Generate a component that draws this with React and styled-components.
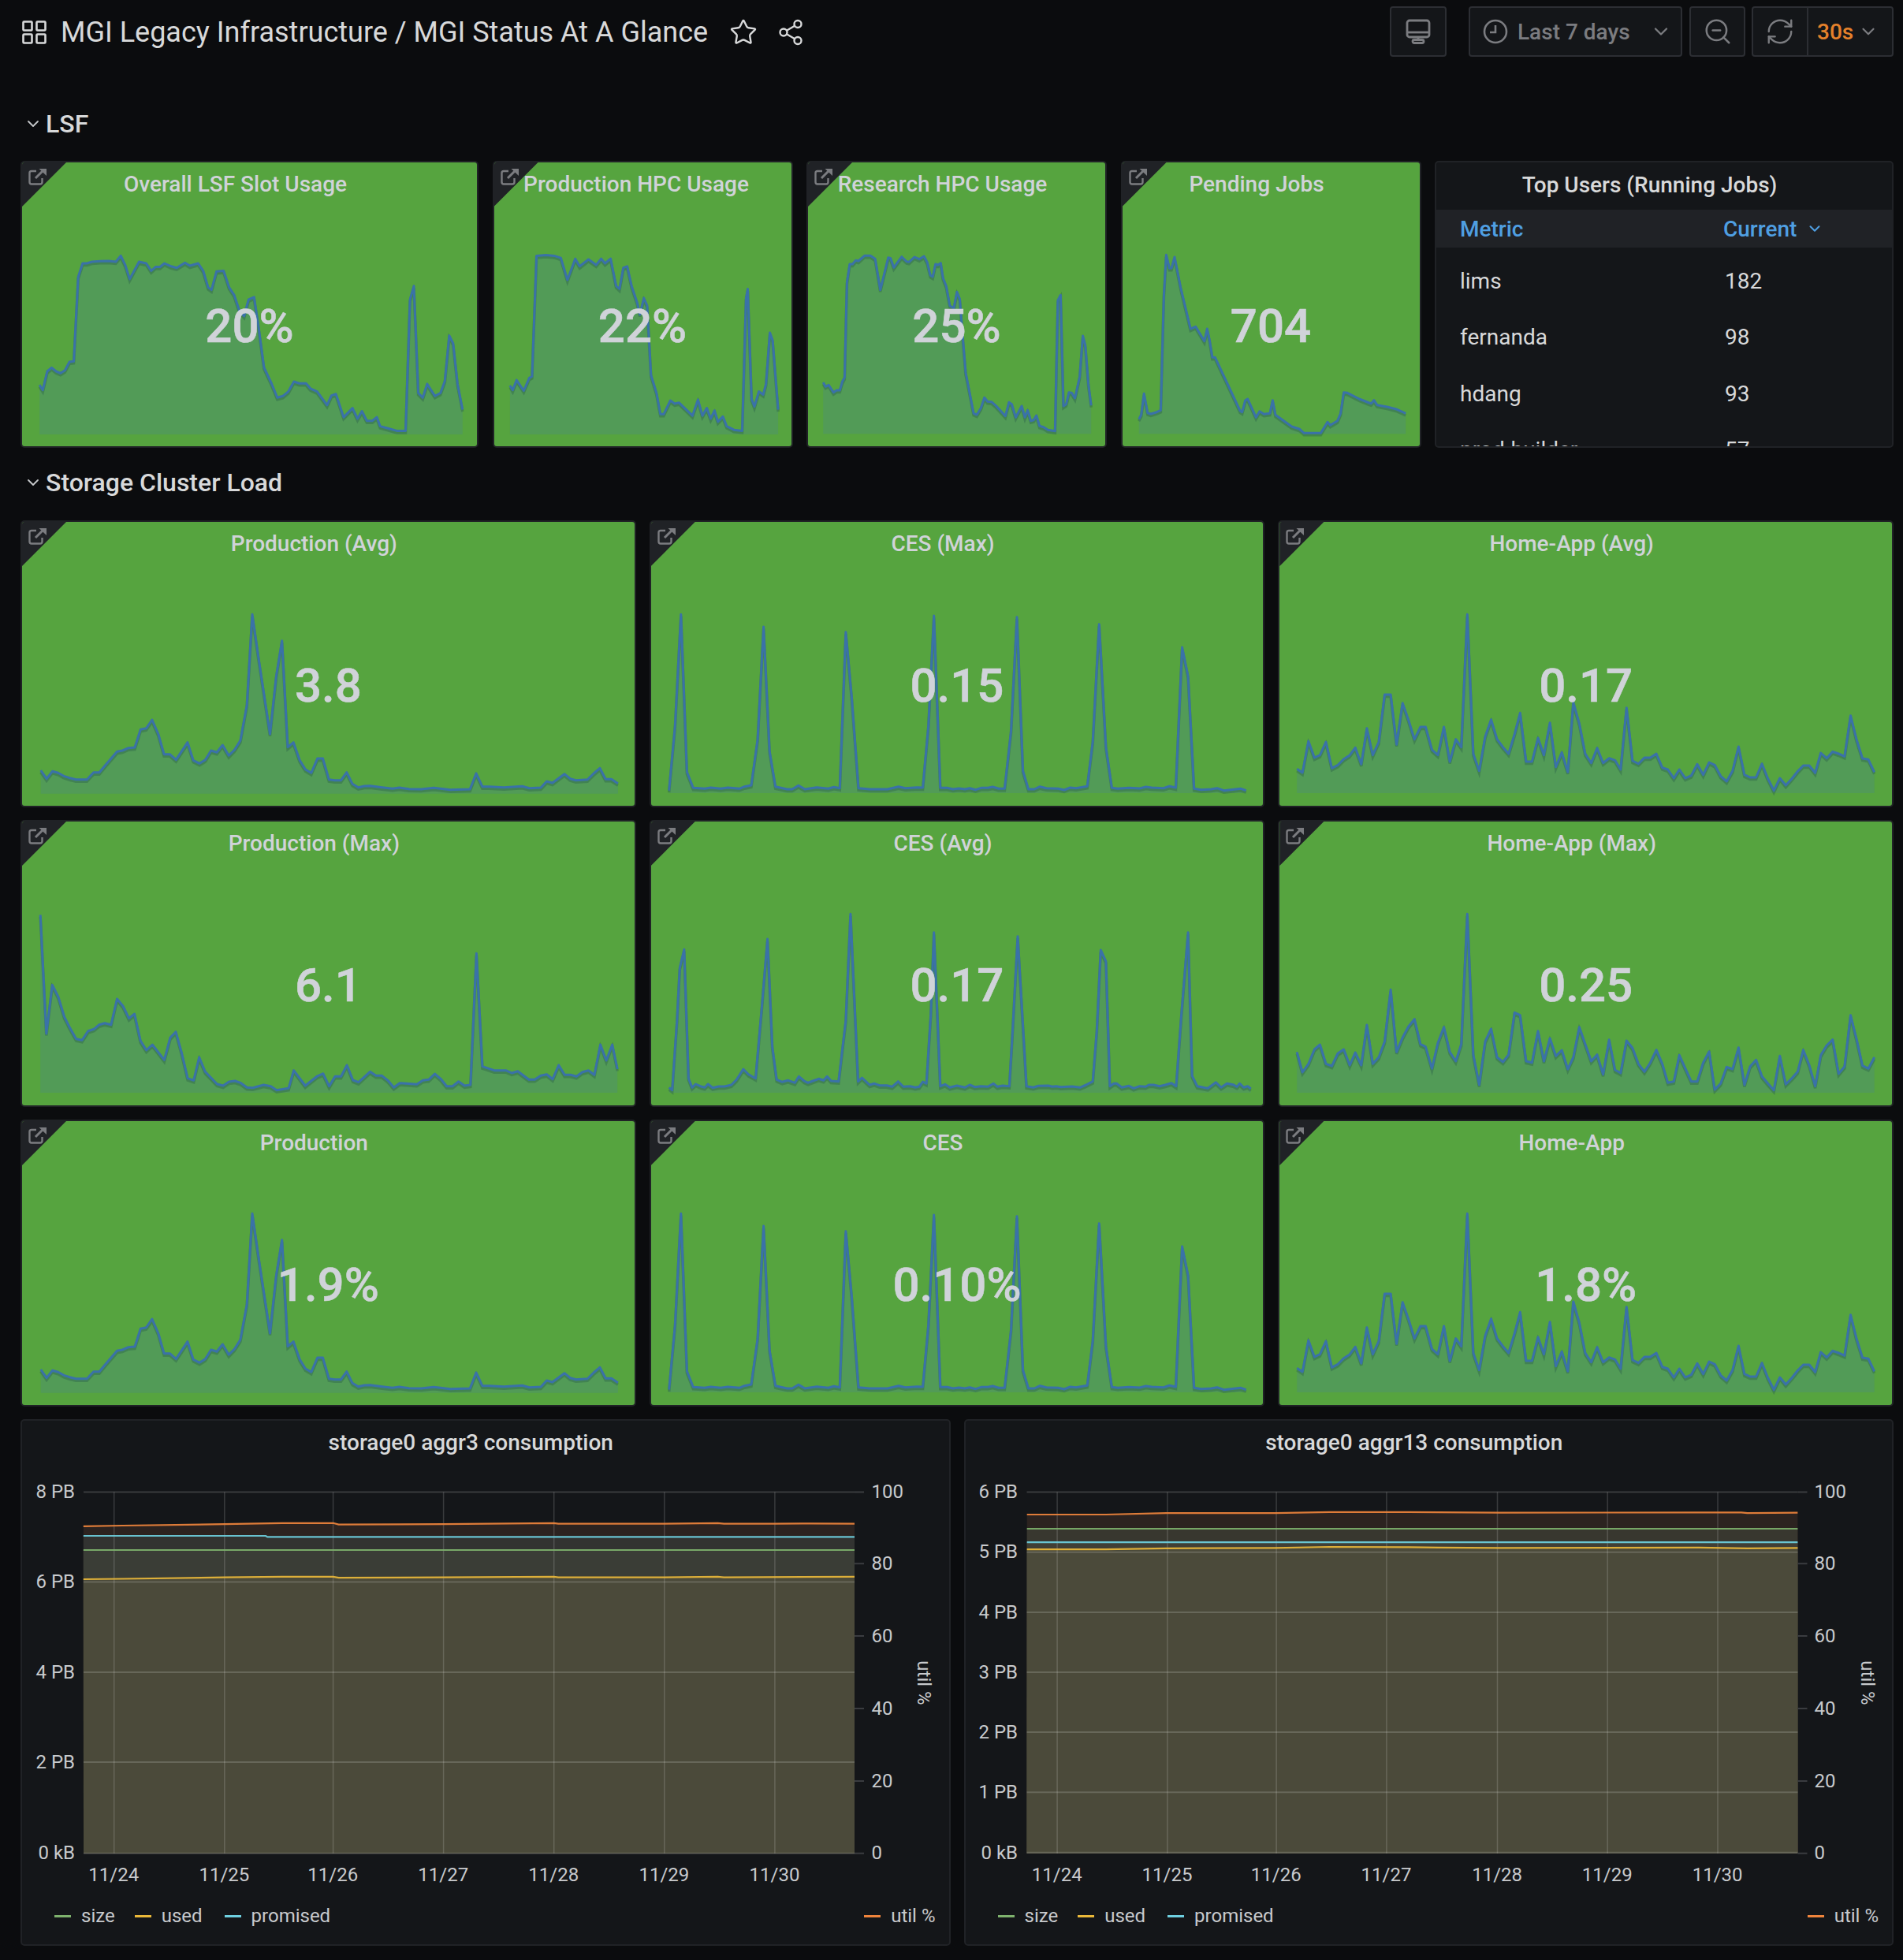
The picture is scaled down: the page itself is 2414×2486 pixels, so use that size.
import React from "react";
import styled, { createGlobalStyle } from "styled-components";
import { Star, Share2, ZoomOut, RefreshCw, ChevronDown } from "lucide-react";

const Global = createGlobalStyle`
  html, body { margin: 0; padding: 0; background: #0b0c0e; }
  * { box-sizing: border-box; }
  body { font-family: Roboto, "Liberation Sans", sans-serif; color: #d8d9da; }
`;

const Page = styled.div`
  width: 2414px;
  height: 2486px;
  padding: 8px 12px 18px 26px;
  overflow: hidden;
`;
const Toolbar = styled.header`
  display: flex;
  align-items: center;
  height: 64px;
`;
const Breadcrumb = styled.div`
  display: flex;
  align-items: center;
  color: #d8d9da;
  font-size: 36px;
  margin-left: 2px;
  padding-top: 2px;
`;
const TitleText = styled.span`
  margin: 0 0 0 18px;
`;
const HeadIcon = styled.span`
  display: inline-flex;
  color: #d8d9da;
  margin-left: ${(p) => p.$ml}px;
`;
const Tools = styled.div`
  margin-left: auto;
  display: flex;
  align-items: stretch;
  height: 64px;
`;
const ToolButton = styled.div`
  display: flex;
  align-items: center;
  justify-content: ${(p) => p.$justify || "center"};
  width: ${(p) => p.$w}px;
  margin-left: ${(p) => p.$ml || 0}px;
  background: #141619;
  border: 2px solid #2c2e33;
  border-radius: 4px;
  color: #7b7c80;
  font-weight: 500;
  font-size: 28px;
  padding: ${(p) => p.$pad || 0};
`;
const ToolGroup = styled.div`
  display: flex;
  margin-left: 8px;
  width: 180px;
  background: #141619;
  border: 2px solid #2c2e33;
  border-radius: 4px;
`;
const RefreshPart = styled.div`
  width: 70px;
  display: flex;
  align-items: center;
  justify-content: center;
  color: #7b7c80;
  border-right: 2px solid #2c2e33;
`;
const IntervalPart = styled.div`
  flex: 1;
  display: flex;
  align-items: center;
  padding-left: 11px;
  color: #e5812b;
  font-size: 28px;
  font-weight: 500;
`;
const Chev = styled.span`
  display: inline-flex;
  color: #7b7c80;
  margin-left: ${(p) => p.$ml}px;
`;
const RangeText = styled.span`
  margin-left: 12px;
`;

const SectionHeader = styled.div`
  display: flex;
  align-items: center;
  height: 40px;
  margin: ${(p) => p.$m};
  font-size: 32px;
  font-weight: 500;
  color: #d8d9da;
`;
const SectionChevron = styled.span`
  display: inline-flex;
  color: #c7c9cc;
  margin: 0 4px 0 4px;
`;

const TopRow = styled.div`
  display: grid;
  grid-template-columns: 581px 381px 381px 381px 582px;
  column-gap: 17.5px;
  height: 364px;
`;
const StatGrid = styled.div`
  display: grid;
  grid-template-columns: repeat(3, 1fr);
  grid-auto-rows: 364px;
  gap: 16px 17px;
`;
const ChartRow = styled.div`
  display: grid;
  grid-template-columns: repeat(2, 1fr);
  column-gap: 17px;
  margin-top: 16px;
`;

const StatPanel = styled.section`
  position: relative;
  display: flex;
  flex-direction: column;
  height: 364px;
  background: #56a43f;
  border: 2px solid #202226;
  border-radius: 5px;
  overflow: hidden;
`;
const Corner = styled.div`
  position: absolute;
  left: 0;
  top: 0;
  width: 56px;
  height: 56px;
  background: #202226;
  clip-path: polygon(0 0, 100% 0, 0 100%);
`;
const CornerIcon = styled.svg`
  position: absolute;
  left: 8px;
  top: 7px;
`;
const PanelTitle = styled.h3`
  position: relative;
  margin: 0;
  height: ${(p) => p.$h || 55}px;
  flex: none;
  display: flex;
  align-items: center;
  justify-content: center;
  padding-right: ${(p) => p.$pr ?? 36}px;
  padding-bottom: ${(p) => p.$pb || 0}px;
  font-size: 28px;
  font-weight: 500;
  color: ${(p) => p.$color || "#d0d3d8"};
  white-space: nowrap;
`;
const ValueArea = styled.div`
  position: relative;
  flex: 1;
  display: flex;
  align-items: center;
  justify-content: center;
  padding-bottom: 1px;
`;
const Value = styled.span`
  font-size: 60px;
  font-weight: 500;
  color: #d0d3d9;
  -webkit-text-stroke: 0.6px #d0d3d9;
`;
const SparkSvg = styled.svg`
  position: absolute;
  left: 0;
  top: 0;
  width: 100%;
  height: 100%;
  overflow: visible;
`;

const DarkPanel = styled.section`
  background: #141619;
  border: 2px solid #202226;
  border-radius: 5px;
  overflow: hidden;
`;
const TablePanel = styled(DarkPanel)`
  height: 364px;
`;
const TableHead = styled.div`
  display: grid;
  grid-template-columns: 334px 1fr;
  align-items: center;
  height: 48px;
  padding-left: 30px;
  background: #202226;
  color: #4f9fe2;
  font-size: 28px;
  font-weight: 500;
`;
const HeadCell = styled.span`
  display: flex;
  align-items: center;
  gap: 12px;
`;
const TableBody = styled.div`
  padding-top: 6.5px;
`;
const TableRow = styled.div`
  display: grid;
  grid-template-columns: 336px 1fr;
  align-items: center;
  height: 71.5px;
  padding-left: 30px;
  font-size: 28px;
  color: #d8d9da;
`;

const ChartPanel = styled(DarkPanel)`
  height: 668px;
  display: flex;
  flex-direction: column;
`;
const ChartSvg = styled.svg`
  display: block;
  flex: none;
  margin-top: 14px;
`;
const Legend = styled.div`
  flex: 1;
  display: flex;
  align-items: center;
  padding: 0 17px 8px 41px;
  font-size: 24px;
  color: #c8cacd;
`;
const LegendItem = styled.span`
  display: flex;
  align-items: center;
  margin-right: 25px;
  &:nth-child(2) {
    margin-right: 28px;
  }
  &:last-child {
    margin: 0 0 0 auto;
  }
`;
const Swatch = styled.i`
  display: block;
  width: 21px;
  height: 3px;
  margin-right: 13px;
  background: ${(p) => p.$c};
`;

const ExternalIcon = () => (
  <CornerIcon width="24" height="22" viewBox="0 0 24 22" fill="none" stroke="#7b7c80" strokeWidth="2.4">
    <path d="M10 4H4a2.5 2.5 0 0 0-2.5 2.5V18A2.5 2.5 0 0 0 4 20.500h11a2.500 2.500 0 0 0 2.500-2.500v-5" />
    <path d="M9 13 20 2" strokeWidth="3" />
    <path d="M13.500 1h9.500v9z" fill="#7b7c80" stroke="none" />
  </CornerIcon>
);
const AppsIcon = () => (
  <svg width="31" height="30" viewBox="0 0 31 30" fill="none" stroke="#d8d9da" strokeWidth="2.6">
    <rect x="1.500" y="1.500" width="11" height="11" rx="1" />
    <rect x="18.500" y="1.500" width="11" height="11" rx="1" />
    <rect x="1.500" y="17.500" width="11" height="11" rx="1" />
    <rect x="18.500" y="17.500" width="11" height="11" rx="1" />
  </svg>
);
const MonitorIcon = () => (
  <svg width="32" height="32" viewBox="0 0 32 32" fill="none" stroke="#7b7c80" strokeWidth="2.800">
    <rect x="2" y="2" width="28" height="21" rx="3" />
    <path d="M2 17h28" />
    <path d="M16 23v3" />
    <rect x="9" y="26.500" width="14" height="4" rx="2" />
  </svg>
);
const ClockIcon = () => (
  <svg width="32" height="32" viewBox="0 0 32 32" fill="none" stroke="#7b7c80" strokeWidth="2.600">
    <circle cx="16" cy="16" r="14" />
    <path d="M16 8v9h-7" />
  </svg>
);

const spark = (ox, oy, xs, ys, px, py, base, pts) => ({
  base: base / ys + oy - py,
  pts: pts.map(([x, y]) => [+(x / xs + ox - px).toFixed(1), +(y / ys + oy - py).toFixed(1)]),
});
const xa = 1.4255, ya = 2.613, xb = 1.985;

const S = {
  lsf: spark(0, 0, xa, ya, 27, 205, 1437, [[70,1273],[76,1290],[84,1228],[92,1216],[100,1228],[108,1234],[116,1225],[124,1197],[132,1195],[140,915],[148,870],[156,870],[165,865],[180,863],[195,862],[208,865],[217,845],[225,875],[233,922],[250,865],[263,870],[272,895],[280,882],[288,882],[296,870],[308,880],[318,885],[333,868],[342,878],[357,870],[366,895],[375,950],[381,958],[390,897],[403,895],[413,950],[422,975],[432,1030],[440,1045],[448,990],[458,982],[466,1080],[476,1215],[490,1270],[500,1315],[510,1310],[520,1295],[530,1262],[540,1268],[552,1268],[560,1285],[572,1295],[590,1340],[598,1308],[606,1303],[620,1380],[636,1350],[645,1385],[653,1360],[662,1392],[672,1392],[680,1380],[686,1410],[700,1417],[716,1425],[732,1425],[740,990],[747,945],[755,1300],[763,1315],[771,1270],[785,1310],[795,1300],[803,1260],[811,1110],[818,1135],[826,1270],[835,1355]]),
  hpc: spark(0, 0, xa, ya, 625.5, 205, 1437, [[920,1275],[925,1290],[932,1257],[945,1292],[955,1250],[960,1245],[968,845],[985,843],[1000,845],[1012,852],[1024,925],[1038,855],[1046,880],[1062,857],[1076,875],[1085,855],[1092,870],[1102,855],[1112,945],[1118,955],[1125,885],[1132,880],[1140,945],[1150,1000],[1155,1040],[1162,985],[1168,1010],[1175,1240],[1185,1300],[1192,1370],[1198,1370],[1210,1325],[1218,1335],[1226,1332],[1250,1375],[1260,1322],[1268,1375],[1276,1350],[1283,1385],[1290,1358],[1296,1395],[1305,1378],[1312,1410],[1325,1422],[1340,1425],[1347,985],[1350,955],[1357,1320],[1362,1345],[1370,1295],[1378,1305],[1383,1270],[1390,1100],[1395,1125],[1405,1355]]),
  research: spark(1020, 290, xb, 3, 1024, 205, 778, [[46,582],[52,598],[60,592],[72,620],[80,612],[88,612],[94,580],[100,563],[106,200],[113,132],[120,132],[128,118],[135,120],[150,100],[165,100],[177,112],[190,230],[210,107],[216,110],[224,145],[232,128],[244,104],[256,122],[262,124],[276,105],[288,113],[300,102],[308,125],[316,175],[322,180],[329,132],[335,135],[342,128],[348,185],[356,215],[365,290],[375,300],[383,238],[390,265],[397,400],[405,545],[425,700],[433,705],[443,680],[452,640],[460,655],[470,656],[482,672],[505,710],[514,658],[521,665],[531,715],[546,672],[554,715],[561,688],[569,728],[576,725],[583,708],[591,748],[601,752],[612,763],[630,767],[637,270],[644,250],[651,672],[658,665],[665,620],[672,622],[680,642],[692,560],[700,405],[706,440],[714,590],[721,670]]),
  pending: spark(1020, 290, xb, 3, 1422.5, 205, 778, [[840,722],[846,705],[853,625],[862,698],[870,702],[885,695],[895,688],[903,250],[909,97],[917,148],[922,148],[930,105],[945,220],[970,378],[983,370],[1005,425],[1012,378],[1018,420],[1025,487],[1032,487],[1095,690],[1100,695],[1108,650],[1114,645],[1135,715],[1144,692],[1155,703],[1170,700],[1177,650],[1184,706],[1225,750],[1245,760],[1256,775],[1298,775],[1315,733],[1322,745],[1340,728],[1348,700],[1356,620],[1365,622],[1395,645],[1420,660],[1425,662],[1432,650],[1440,668],[1465,675],[1490,685],[1512,700]]),
  prodAvg: spark(0, 640, 1.912, 3, 27, 661, 1097, [[97,1008],[111,1040],[125,1012],[139,1018],[153,1030],[167,1037],[182,1043],[209,1043],[225,1016],[239,1016],[253,990],[282,937],[295,933],[310,923],[325,921],[339,853],[353,848],[367,816],[382,870],[396,947],[410,947],[425,968],[453,902],[467,970],[482,982],[496,968],[510,933],[524,940],[538,912],[553,952],[567,930],[581,895],[597,760],[610,415],[625,580],[653,870],[668,650],[682,515],[696,920],[710,902],[725,970],[739,1005],[753,1018],[768,963],[781,963],[796,1043],[810,1046],[825,1046],[839,1016],[853,1060],[867,1073],[882,1068],[896,1067],[925,1073],[950,1078],[967,1074],[990,1079],[1020,1080],[1050,1075],[1090,1082],[1138,1080],[1153,1020],[1168,1070],[1185,1070],[1220,1073],[1265,1069],[1282,1076],[1310,1074],[1324,1050],[1338,1056],[1367,1022],[1381,1040],[1395,1046],[1423,1043],[1438,1020],[1453,1000],[1467,1042],[1481,1042],[1497,1058]]),
  cesMax: spark(820, 740, xb, 3, 825, 661, 795, [[55,785],[70,540],[85,115],[100,715],[116,775],[145,778],[160,774],[185,778],[203,774],[232,778],[245,770],[262,765],[278,590],[293,162],[308,635],[323,770],[352,780],[365,780],[381,766],[397,780],[427,773],[456,778],[470,772],[485,776],[500,182],[515,430],[532,776],[560,780],[605,780],[633,770],[650,776],[680,773],[694,774],[708,540],[722,120],[738,775],[755,775],[770,780],[785,777],[800,780],[812,776],[827,782],[841,775],[858,775],[870,771],[885,778],[900,778],[916,560],[931,125],[946,710],[960,780],[975,780],[989,770],[1005,776],[1035,778],[1050,783],[1065,774],[1080,776],[1108,769],[1122,600],[1138,152],[1155,620],[1170,775],[1185,778],[1213,775],[1240,777],[1256,771],[1270,774],[1300,776],[1315,769],[1331,774],[1347,240],[1362,350],[1377,778],[1395,782],[1420,780],[1435,776],[1452,785],[1495,778],[1508,785]]),
  homeAvg: spark(1620, 740, xb, 3, 1622.5, 661, 795, [[49,703],[63,717],[78,597],[93,660],[107,650],[122,600],[137,700],[152,688],[167,665],[181,652],[196,622],[211,685],[225,548],[240,650],[255,600],[270,420],[285,420],[300,610],[315,452],[330,517],[345,590],[360,543],[373,543],[389,630],[404,650],[419,543],[434,675],[449,590],[463,620],[478,115],[493,645],[508,710],[523,580],[538,515],[553,590],[568,620],[582,645],[597,570],[611,490],[626,675],[641,675],[656,585],[671,650],[686,527],[701,695],[716,640],[731,715],[745,450],[760,530],[775,645],[790,680],[805,623],[820,680],[835,662],[850,670],[864,705],[879,470],[894,672],[909,683],[924,660],[939,660],[954,645],[969,698],[983,705],[998,738],[1012,705],[1027,738],[1042,728],[1057,685],[1072,725],[1087,678],[1101,688],[1116,730],[1131,750],[1146,710],[1161,618],[1176,725],[1190,735],[1205,735],[1220,683],[1235,740],[1250,785],[1265,738],[1280,765],[1295,740],[1310,712],[1324,690],[1339,690],[1354,718],[1368,642],[1383,662],[1398,637],[1413,645],[1428,655],[1443,500],[1458,590],[1473,663],[1488,667],[1503,715]]),
  prodMax: spark(20, 1120, xb, 3, 27, 1041, 795, [[60,118],[75,570],[90,385],[105,430],[120,505],[135,550],[150,590],[165,595],[180,560],[195,553],[208,536],[222,530],[238,536],[253,438],[268,465],[283,512],[297,495],[312,597],[327,633],[342,612],[372,670],[387,585],[401,563],[416,645],[431,740],[446,748],[460,660],[475,715],[505,762],[520,768],[535,753],[550,750],[565,758],[580,775],[595,776],[622,765],[640,770],[655,785],[685,778],[698,710],[727,768],[757,732],[772,722],[787,770],[802,733],[817,733],[832,690],[847,747],[861,755],[890,715],[905,730],[920,730],[935,748],[950,775],[965,758],[1008,763],[1023,748],[1038,745],[1053,723],[1068,742],[1083,770],[1098,770],[1113,752],[1128,768],[1143,765],[1158,265],[1173,695],[1203,710],[1232,710],[1247,720],[1262,713],[1290,745],[1305,745],[1320,730],[1335,725],[1350,743],[1365,690],[1380,727],[1395,727],[1410,733],[1425,716],[1440,710],[1455,727],[1470,612],[1485,672],[1500,612],[1513,705]]),
  cesAvg: spark(820, 1120, xb, 3, 825, 1041, 795, [[55,775],[63,785],[75,520],[82,320],[93,250],[104,740],[113,775],[122,762],[137,772],[145,775],[153,762],[165,776],[180,771],[195,771],[212,765],[225,745],[242,705],[255,725],[273,740],[288,480],[303,210],[315,620],[326,745],[340,754],[355,748],[372,757],[382,733],[395,750],[405,757],[417,750],[432,742],[444,748],[453,733],[463,750],[482,752],[500,520],[512,115],[531,752],[541,738],[560,765],[572,760],[585,767],[603,767],[617,772],[632,752],[645,772],[662,770],[675,775],[685,772],[694,753],[703,760],[714,500],[722,185],[738,770],[750,763],[762,775],[780,768],[800,775],[812,765],[825,773],[840,770],[858,772],[872,760],[882,772],[895,768],[912,770],[920,560],[933,200],[955,770],[972,775],[985,769],[1010,768],[1020,772],[1030,770],[1042,773],[1070,771],[1090,775],[1105,765],[1122,752],[1132,560],[1142,252],[1155,295],[1165,770],[1175,760],[1182,760],[1195,775],[1213,769],[1225,778],[1240,770],[1255,772],[1263,765],[1275,765],[1290,770],[1305,765],[1320,758],[1332,770],[1345,500],[1362,185],[1372,730],[1385,770],[1405,776],[1412,778],[1432,755],[1445,775],[1460,760],[1475,764],[1485,772],[1492,760],[1502,775],[1512,770],[1520,780]]),
  homeMax: spark(1620, 1120, xb, 3, 1622.5, 1041, 795, [[49,640],[63,717],[78,685],[93,630],[107,612],[122,685],[137,693],[152,645],[167,630],[182,690],[196,642],[211,690],[225,537],[240,685],[255,660],[270,600],[285,403],[300,640],[315,585],[330,543],[345,515],[360,610],[373,620],[389,703],[404,605],[419,545],[434,640],[449,675],[463,610],[478,115],[493,650],[508,765],[523,600],[538,552],[553,660],[568,678],[582,650],[597,490],[611,500],[626,675],[641,680],[656,560],[671,675],[686,588],[701,655],[716,633],[731,705],[745,660],[760,545],[775,610],[790,675],[805,650],[820,725],[835,593],[850,708],[864,720],[879,597],[894,625],[909,685],[924,715],[939,680],[954,632],[969,685],[983,757],[998,752],[1012,652],[1042,752],[1057,752],[1072,680],[1087,638],[1101,783],[1116,760],[1131,697],[1146,705],[1161,623],[1176,765],[1190,695],[1205,670],[1220,733],[1235,760],[1250,785],[1265,655],[1280,763],[1295,740],[1310,715],[1324,632],[1339,690],[1354,770],[1368,652],[1383,615],[1398,593],[1413,722],[1428,695],[1443,500],[1458,590],[1473,692],[1488,703],[1503,660]]),
};

const Spark = ({ data }) => {
  const line = data.pts.map((p) => p.join(",")).join(" ");
  const first = data.pts[0][0];
  const last = data.pts[data.pts.length - 1][0];
  return (
    <SparkSvg>
      <polygon points={`${first},${data.base} ${line} ${last},${data.base}`} fill="#529b57" />
      <polyline points={line} transform="translate(0 2.500)" fill="none" stroke="rgba(52,112,78,.55)" strokeWidth="3.500" />
      <polyline points={line} fill="none" stroke="#3a72a8" strokeWidth="3" strokeLinejoin="round" />
    </SparkSvg>
  );
};

const Stat = ({ title, value, data, titlePad }) => (
  <StatPanel>
    <Spark data={data} />
    <Corner />
    <ExternalIcon />
    <PanelTitle $pr={titlePad}>{title}</PanelTitle>
    <ValueArea>
      <Value>{value}</Value>
    </ValueArea>
  </StatPanel>
);

const toPts = (arr, ox, xs) =>
  arr.map(([x, y]) => [+(x / xs + ox).toFixed(1), +(y / 2.22 + 1780).toFixed(1)]);
const flat = (p) => p.map((q) => q.join(",")).join(" ");

const COLORS = { size: "#7eb26d", used: "#eab839", promised: "#6ed0e0", util: "#ef843c" };
const XLABELS = ["11/24", "11/25", "11/26", "11/27", "11/28", "11/29", "11/30"];
const RIGHT = [
  [100, 1892.6],
  [80, 1983.2],
  [60, 2075],
  [40, 2167],
  [20, 2259],
  [0, 2350.7],
];

const CH1 = {
  px: 26,
  x0: 106,
  x1: 1084,
  labelX: 95,
  rightLabel: 1105.500,
  unitX: 1172,
  grid: [144.7, 284.8, 422.6, 562.6, 702.7, 842.8, 982.9],
  left: [["8 PB", 1892.6], ["6 PB", 2006.6], ["4 PB", 2121], ["2 PB", 2235], ["0 kB", 2350.7]],
  order: ["util", "promised", "size", "used"],
  fills: { util: "#2c2320", promised: "#323331", size: "#3a3d36", used: "#4b4a3a" },
  series: {
    util: toPts([[136,346],[200,344],[366,340],[460,337],[543,337],[552,341],[723,340],[903,337],[910,339],[1083,339],[1170,337],[1180,339],[1263,339],[1320,338],[1393,339]], 0, 1.285),
    promised: toPts([[136,373],[433,373],[436,376],[1393,376]], 0, 1.285),
    size: toPts([[136,413],[1393,413]], 0, 1.285),
    used: toPts([[136,495],[200,494],[366,490],[460,488],[543,488],[552,491],[723,490],[903,488],[910,490],[1083,490],[1170,488],[1180,490],[1393,488]], 0, 1.285),
  },
};
const CH2 = {
  px: 1222.5,
  x0: 1302,
  x1: 2280,
  labelX: 1290.500,
  rightLabel: 2301,
  unitX: 2368,
  grid: [1340.6, 1480.4, 1618.6, 1758.4, 1899, 2038.7, 2178.5],
  left: [["6 PB", 1892.6], ["5 PB", 1968.7], ["4 PB", 2044.9], ["3 PB", 2121], ["2 PB", 2197.1], ["1 PB", 2273.2], ["0 kB", 2349.8]],
  order: ["util", "size", "promised", "used"],
  fills: { util: "#2c2320", size: "#38372f", promised: "#403f35", used: "#4b4a3a" },
  series: {
    util: toPts([[120,313],[250,313],[350,309],[530,309],[620,306],[750,306],[900,308],[1230,307],[1300,307],[1310,309],[1393,308]], 1210, 1.302),
    size: toPts([[120,353],[1393,353]], 1210, 1.302),
    promised: toPts([[120,391],[1393,391]], 1210, 1.302),
    used: toPts([[120,411],[250,411],[350,408],[530,407],[620,404],[750,405],[800,406],[900,407],[1230,406],[1310,408],[1393,407]], 1210, 1.302),
  },
};

const AxisText = styled.text`
  font-family: Roboto, "Liberation Sans", sans-serif;
  font-size: 24px;
  fill: #c8cacd;
`;

const Chart = ({ c }) => {
  const top = 1892.6;
  const bottom = 2350.7;
  return (
    <ChartSvg width="1175" height="528" viewBox={`${c.px + 2} 1874 1175 528`}>
      {c.order.map((k) => (
        <polygon
          key={k}
          fill={c.fills[k]}
          points={`${c.x0},${bottom} ${flat(c.series[k])} ${c.x1},${bottom}`}
        />
      ))}
      {c.left.map(([t, y]) => (
        <line key={t} x1={c.x0} x2={c.x1} y1={y} y2={y} stroke="rgba(255,255,255,.16)" strokeWidth="2" />
      ))}
      {c.grid.map((x) => (
        <line key={x} x1={x} x2={x} y1={top} y2={bottom} stroke="rgba(255,255,255,.16)" strokeWidth="1.500" />
      ))}
      {c.order.map((k) => (
        <polyline key={k} fill="none" stroke={COLORS[k]} strokeWidth="2.200" points={flat(c.series[k])} opacity=".92" />
      ))}
      {RIGHT.map(([t, y]) => (
        <g key={t}>
          <line x1={c.x1} x2={c.x1 + 12} y1={y} y2={y} stroke="#3a3c40" strokeWidth="2" />
          <AxisText x={c.rightLabel} y={y - 0.3} dominantBaseline="central">{t}</AxisText>
        </g>
      ))}
      {c.left.map(([t, y]) => (
        <AxisText key={t} x={c.labelX} y={y - 0.3} textAnchor="end" dominantBaseline="central">{t}</AxisText>
      ))}
      {c.grid.map((x, i) => (
        <AxisText key={x} x={x - 0.4} y={2378} textAnchor="middle" dominantBaseline="central">{XLABELS[i]}</AxisText>
      ))}
      <AxisText
        transform={`translate(${c.unitX} 2134.500) rotate(90)`}
        textAnchor="middle"
        dominantBaseline="central"
      >
        util %
      </AxisText>
    </ChartSvg>
  );
};

const LegendRow = () => (
  <Legend>
    <LegendItem><Swatch $c={COLORS.size} />size</LegendItem>
    <LegendItem><Swatch $c={COLORS.used} />used</LegendItem>
    <LegendItem><Swatch $c={COLORS.promised} />promised</LegendItem>
    <LegendItem><Swatch $c={COLORS.util} />util %</LegendItem>
  </Legend>
);

const ROWS = [["lims", "182"], ["fernanda", "98"], ["hdang", "93"], ["prod-builder", "57"]];

export default function App() {
  return (
    <Page>
      <Global />
      <Toolbar>
        <Breadcrumb>
          <AppsIcon />
          <TitleText>MGI Legacy Infrastructure / MGI Status At A Glance</TitleText>
          <HeadIcon $ml={27}><Star size={36} strokeWidth={1.600} /></HeadIcon>
          <HeadIcon $ml={24}><Share2 size={36} strokeWidth={1.600} /></HeadIcon>
        </Breadcrumb>
        <Tools>
          <ToolButton $w={72}><MonitorIcon /></ToolButton>
          <ToolButton $w={271} $ml={28} $justify="flex-start" $pad="0 0 0 16px">
            <ClockIcon />
            <RangeText>Last 7 days</RangeText>
            <Chev $ml={25}><ChevronDown size={28} strokeWidth={2} /></Chev>
          </ToolButton>
          <ToolButton $w={71} $ml={9}><ZoomOut size={38} strokeWidth={1.600} /></ToolButton>
          <ToolGroup>
            <RefreshPart><RefreshCw size={38} strokeWidth={1.500} /></RefreshPart>
            <IntervalPart>
              30s
              <Chev $ml={6}><ChevronDown size={26} strokeWidth={2} /></Chev>
            </IntervalPart>
          </ToolGroup>
        </Tools>
      </Toolbar>

      <SectionHeader $m="65px 0 27px">
        <SectionChevron><ChevronDown size={24} strokeWidth={1.800} /></SectionChevron>
        LSF
      </SectionHeader>
      <TopRow>
        <Stat title="Overall LSF Slot Usage" value="20%" data={S.lsf} />
        <Stat title="Production HPC Usage" value="22%" data={S.hpc} titlePad={16} />
        <Stat title="Research HPC Usage" value="25%" data={S.research} />
        <Stat title="Pending Jobs" value="704" data={S.pending} />
        <TablePanel>
          <PanelTitle $h={60} $pb={4} $pr={37} $color="#d8d9da">Top Users (Running Jobs)</PanelTitle>
          <TableHead>
            <HeadCell>Metric</HeadCell>
            <HeadCell>Current <ChevronDown size={22} strokeWidth={2.200} /></HeadCell>
          </TableHead>
          <TableBody>
            {ROWS.map(([n, v]) => (
              <TableRow key={n}>
                <span>{n}</span>
                <span>{v}</span>
              </TableRow>
            ))}
          </TableBody>
        </TablePanel>
      </TopRow>

      <SectionHeader $m="24px 0 28px">
        <SectionChevron><ChevronDown size={24} strokeWidth={1.800} /></SectionChevron>
        Storage Cluster Load
      </SectionHeader>
      <StatGrid>
        <Stat title="Production (Avg)" value="3.8" data={S.prodAvg} />
        <Stat title="CES (Max)" value="0.15" data={S.cesMax} />
        <Stat title="Home-App (Avg)" value="0.17" data={S.homeAvg} />
        <Stat title="Production (Max)" value="6.1" data={S.prodMax} />
        <Stat title="CES (Avg)" value="0.17" data={S.cesAvg} />
        <Stat title="Home-App (Max)" value="0.25" data={S.homeMax} />
        <Stat title="Production" value="1.9%" data={S.prodAvg} />
        <Stat title="CES" value="0.10%" data={S.cesMax} />
        <Stat title="Home-App" value="1.8%" data={S.homeAvg} />
      </StatGrid>

      <ChartRow>
        <ChartPanel>
          <PanelTitle $h={58} $pb={3} $pr={37} $color="#d8d9da">storage0 aggr3 consumption</PanelTitle>
          <Chart c={CH1} />
          <LegendRow />
        </ChartPanel>
        <ChartPanel>
          <PanelTitle $h={58} $pb={3} $pr={37} $color="#d8d9da">storage0 aggr13 consumption</PanelTitle>
          <Chart c={CH2} />
          <LegendRow />
        </ChartPanel>
      </ChartRow>
    </Page>
  );
}
